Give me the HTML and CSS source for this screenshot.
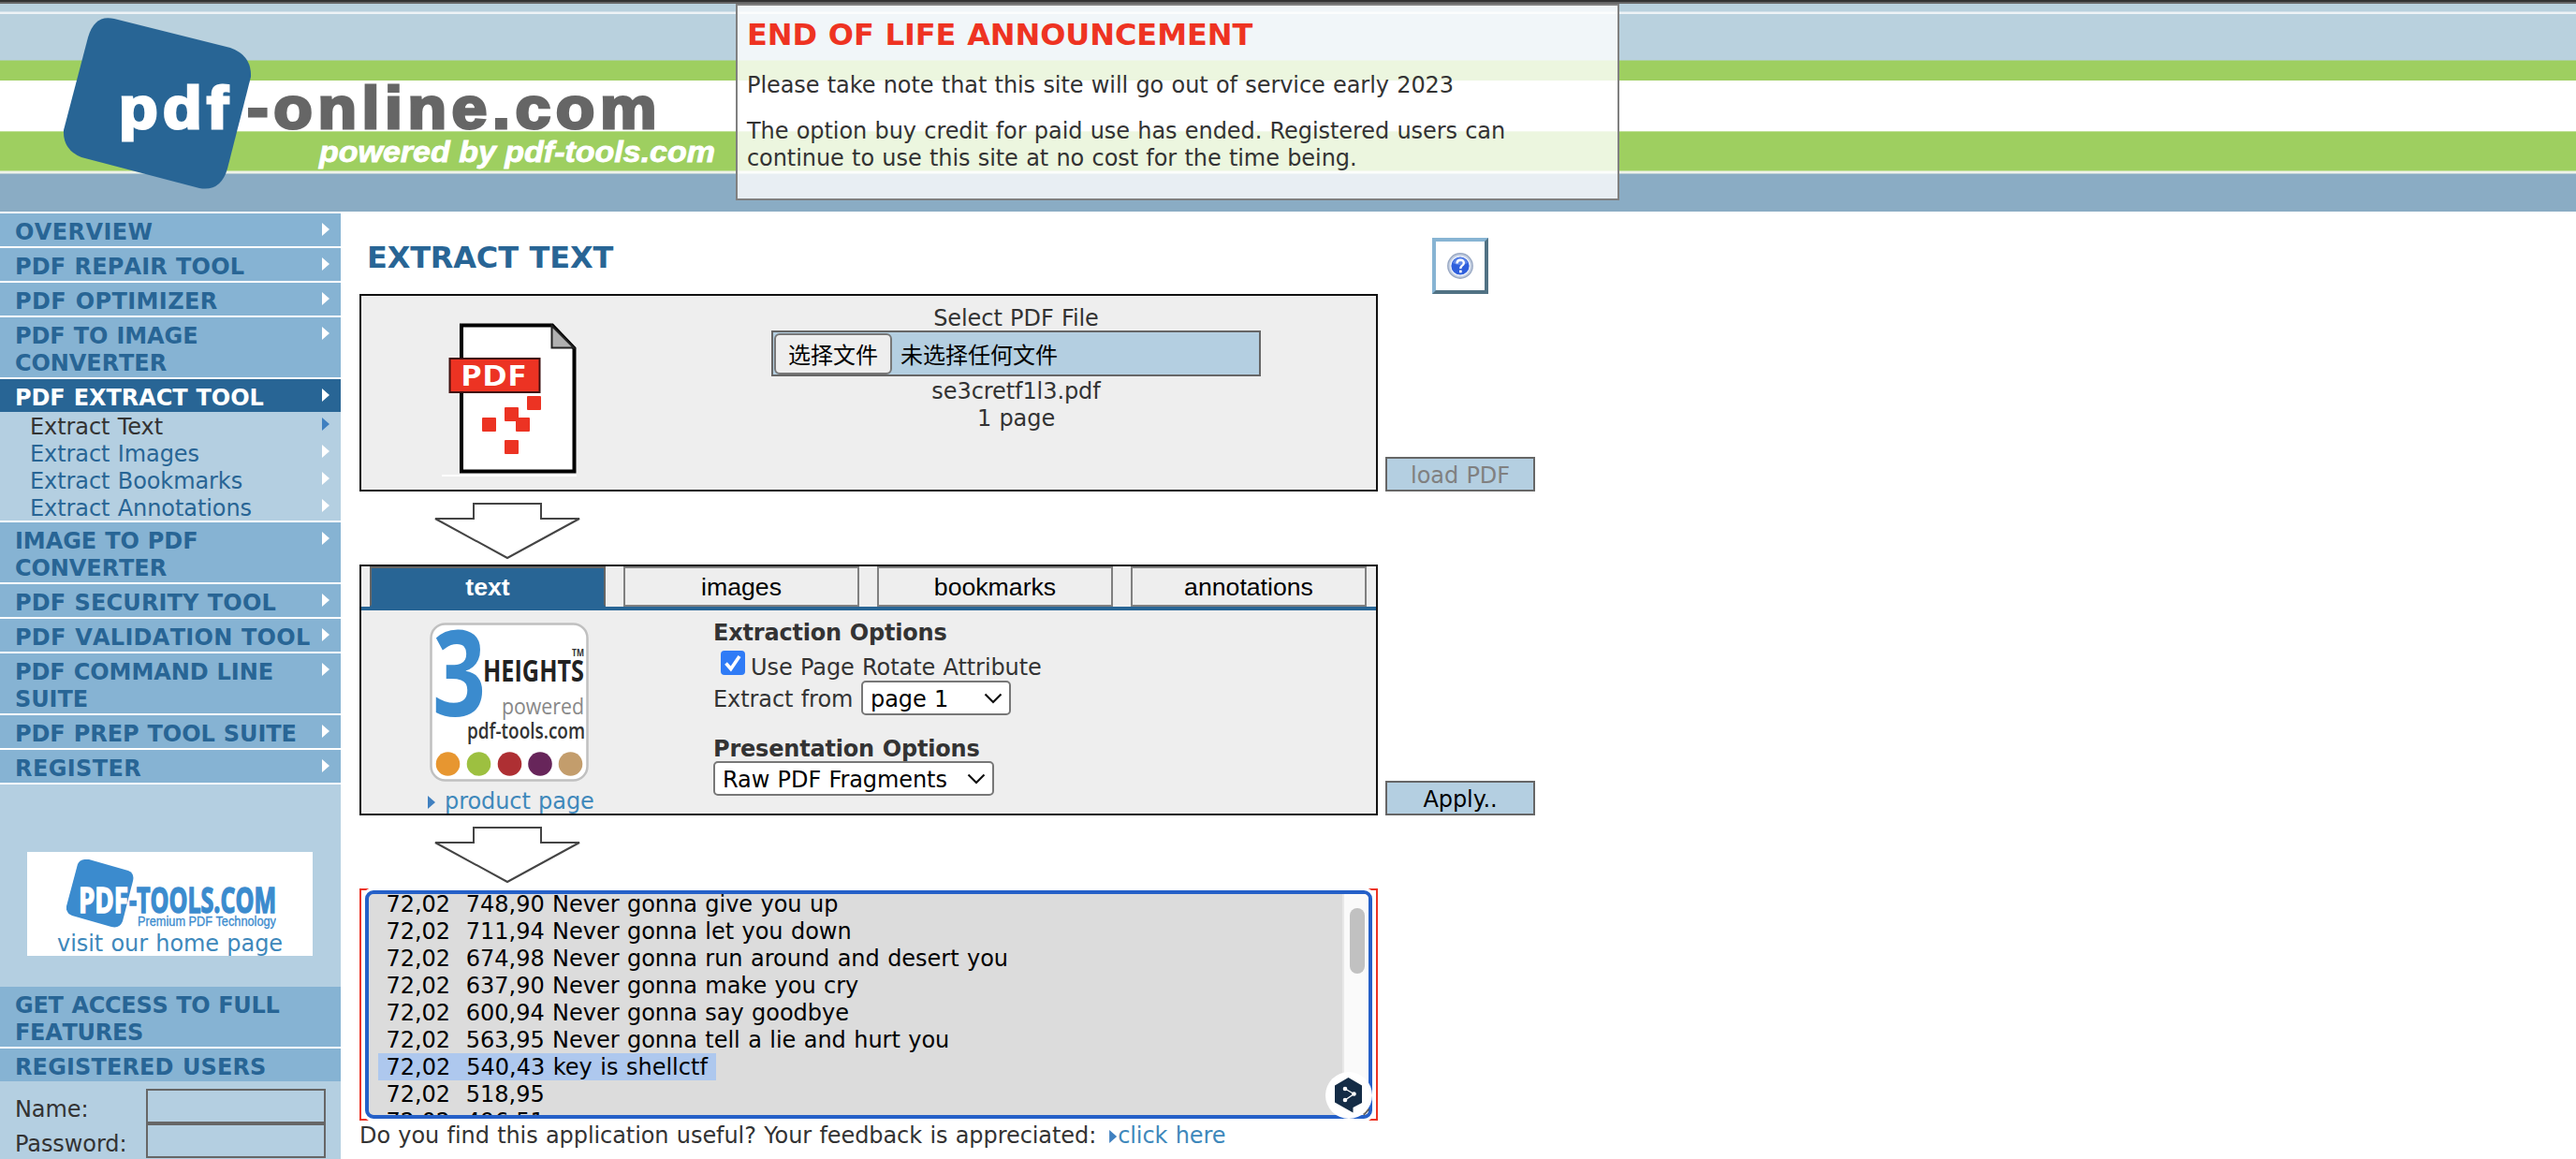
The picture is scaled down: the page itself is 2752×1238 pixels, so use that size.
FILE: index.html
```html
<!DOCTYPE html>
<html lang="en">
<head>
<meta charset="utf-8">
<title>Extract Text</title>
<link rel="stylesheet" href="styles.css">
</head>
<body>
<header class="banner">
  <svg class="logo" viewBox="0 0 780 222" width="780" height="222">
    <path class="logo-tile" d="M122 16L246 47Q269 55 268 78L243 176Q236 201 213 197L87 164Q67 156 68 135L94 36Q101 11 122 16Z"/>
    <g transform="scale(1.08 1)">
      <text class="logo-pdf" x="117.500" y="133" textLength="108" lengthAdjust="spacing">pdf</text>
      <text class="logo-online" x="244.500" y="133" textLength="405" lengthAdjust="spacing">-online.com</text>
    </g>
    <text class="logo-powered" x="341" y="169" textLength="423" lengthAdjust="spacingAndGlyphs">powered by pdf-tools.com</text>
  </svg>
  <div class="notice">
    <h2>END OF LIFE ANNOUNCEMENT</h2>
    <p>Please take note that this site will go out of service early 2023</p>
    <p>The option buy credit for paid use has ended. Registered users can<br>continue to use this site at no cost for the time being.</p>
  </div>
</header>
<div class="page">
  <nav class="sidebar">
    <ul class="menu">
      <li><a class="wide"><span>OVERVIEW</span><i></i></a></li>
      <li><a class="open"><span>PDF REPAIR TOOL</span><i></i></a></li>
      <li><a class="wide"><span>PDF OPTIMIZER</span><i></i></a></li>
      <li><a><span>PDF TO IMAGE<br>CONVERTER</span><i></i></a></li>
      <li><a class="current"><span>PDF EXTRACT TOOL</span><i></i></a>
        <ul class="submenu">
          <li class="here"><span>Extract Text</span><i></i></li>
          <li><span>Extract Images</span><i></i></li>
          <li><span>Extract Bookmarks</span><i></i></li>
          <li><span>Extract Annotations</span><i></i></li>
        </ul>
      </li>
      <li><a><span>IMAGE TO PDF<br>CONVERTER</span><i></i></a></li>
      <li><a class="open"><span>PDF SECURITY TOOL</span><i></i></a></li>
      <li><a class="mid"><span>PDF VALIDATION TOOL</span><i></i></a></li>
      <li><a><span>PDF COMMAND LINE<br>SUITE</span><i></i></a></li>
      <li><a><span>PDF PREP TOOL SUITE</span><i></i></a></li>
      <li><a class="wide"><span>REGISTER</span><i></i></a></li>
    </ul>
    <div class="promo">
      <svg viewBox="0 0 224 75" width="224" height="75">
        <path class="promo-tile" d="M24 0L66 12Q73 15 71 23L60 66Q57 74 48 72L6 60Q-1 57 0 50L12 5Q15 -1 24 0Z"/>
        <text class="promo-pdf" x="13" y="57" textLength="53" lengthAdjust="spacingAndGlyphs">PDF</text>
        <text class="promo-tools" x="67" y="57" textLength="157" lengthAdjust="spacingAndGlyphs">-TOOLS.COM</text>
        <text class="promo-tag" x="76" y="71" textLength="148" lengthAdjust="spacingAndGlyphs">Premium PDF Technology</text>
      </svg>
      <span class="promo-link">visit our home page</span>
    </div>
    <div class="access">
      <h3 class="tight">GET ACCESS TO FULL<br>FEATURES</h3>
      <h3 class="open">REGISTERED USERS</h3>
    </div>
    <form class="login">
      <label><span>Name:</span><input type="text"></label>
      <label><span>Password:</span><input type="password"></label>
    </form>
  </nav>
  <main class="content">
    <div class="title-row">
      <h1>EXTRACT TEXT</h1>
      <button class="help" type="button" aria-label="Help">
        <svg viewBox="0 0 28 28" width="28" height="28">
          <circle cx="14" cy="14" r="13.200" fill="#c4cfe0" stroke="#9aa9c4" stroke-width="1.400"/>
          <circle cx="14" cy="14" r="10.200" fill="#2f5fdc" stroke="#eef3fc" stroke-width="1.200"/>
          <path d="M6 11Q8 5.500 14 5.300Q20 5.500 22 11Q14 15 6 11Z" fill="#7fa2f2" opacity=".6"/>
          <path d="M10.500 11.500Q10.600 7.800 14.200 7.800Q17.900 7.900 17.800 11Q17.700 13 15.700 14Q14.300 15 14.300 17" fill="none" stroke="#fff" stroke-width="2.400"/>
          <rect x="13" y="18.600" width="2.700" height="2.700" fill="#fff"/>
        </svg>
      </button>
    </div>
    <section class="step">
      <div class="panel upload">
        <svg class="pdf-icon" viewBox="0 0 146 166" width="146" height="166">
          <path d="M21 3.500H118L141.500 28V159.500H21Z" fill="#fff" stroke="#000" stroke-width="4"/>
          <path d="M117.500 4V27.500H141Z" fill="#b0b0b0" stroke="#222" stroke-width="2"/>
          <rect x="8.500" y="39" width="96" height="36" fill="#ec3323" stroke="#401010" stroke-width="2"/>
          <text class="pdf-label" x="20" y="67.500" textLength="70" lengthAdjust="spacingAndGlyphs">PDF</text>
          <g fill="#ec3323"><rect x="91" y="79" width="15" height="15" rx="1"/><rect x="67" y="91" width="15" height="15" rx="1"/><rect x="43" y="102" width="15" height="15" rx="1"/><rect x="79" y="102" width="15" height="15" rx="1"/><rect x="67" y="126" width="15" height="15" rx="1"/></g>
          <rect x="0" y="163" width="144" height="2" fill="#fff"/>
        </svg>
        <div class="picker">
          <span>Select PDF File</span>
          <div class="file"><button type="button">选择文件</button><em>未选择任何文件</em></div>
          <span>se3cretf1l3.pdf</span>
          <span>1 page</span>
        </div>
      </div>
      <button class="action" type="button" disabled>load PDF</button>
    </section>
    <div class="flow-arrow">
      <svg viewBox="0 0 158 64" width="158" height="64"><path d="M43 3H115V19H156L79 61L2 19H43Z"/></svg>
    </div>
    <section class="step">
      <div class="panel options">
        <div class="tabs">
          <button class="on" type="button">text</button>
          <button type="button">images</button>
          <button type="button">bookmarks</button>
          <button type="button">annotations</button>
        </div>
        <div class="settings">
          <div class="product">
            <svg viewBox="0 0 170 170" width="170" height="170">
              <rect x="1.500" y="1.500" width="167" height="167" rx="15" fill="#fff" stroke="#c0c0c0" stroke-width="2.500"/>
              <text class="h-three" x="3" y="100" textLength="57" lengthAdjust="spacingAndGlyphs">3</text>
              <text class="h-name" x="57" y="62.500" textLength="108" lengthAdjust="spacingAndGlyphs">HEIGHTS</text>
              <text class="h-tm" x="152" y="36" textLength="13" lengthAdjust="spacingAndGlyphs">TM</text>
              <text class="h-powered" x="77" y="97.500" textLength="88" lengthAdjust="spacingAndGlyphs">powered</text>
              <text class="h-site" x="40" y="123.500" textLength="126" lengthAdjust="spacingAndGlyphs">pdf-tools.com</text>
              <circle cx="19.500" cy="151" r="12.800" fill="#e79630"/><circle cx="52.500" cy="151" r="12.800" fill="#9dc040"/><circle cx="85.500" cy="151" r="12.800" fill="#ae2f33"/><circle cx="118" cy="151" r="12.800" fill="#67255a"/><circle cx="150.500" cy="151" r="12.800" fill="#c39d6c"/>
            </svg>
            <a class="product-link"><i></i><span>product page</span></a>
          </div>
          <div class="fields">
            <h4>Extraction Options</h4>
            <div class="check"><svg viewBox="0 0 26 26" width="26" height="26"><rect width="26" height="26" rx="4" fill="#2f7bf6"/><path d="M5.500 13.500L10.800 19.500L20 6" fill="none" stroke="#fff" stroke-width="3.600"/></svg><span>Use Page Rotate Attribute</span></div>
            <div class="from"><span>Extract from</span>
              <div class="select short"><span>page 1</span><svg viewBox="0 0 20 12" width="20" height="12"><path d="M1.500 1.500L10 10L18.500 1.500"/></svg></div></div>
            <h4 class="second">Presentation Options</h4>
            <div class="select long"><span>Raw PDF Fragments</span><svg viewBox="0 0 20 12" width="20" height="12"><path d="M1.500 1.500L10 10L18.500 1.500"/></svg></div>
          </div>
        </div>
      </div>
      <button class="action" type="button">Apply..</button>
    </section>
    <div class="flow-arrow">
      <svg viewBox="0 0 158 64" width="158" height="64"><path d="M43 3H115V19H156L79 61L2 19H43Z"/></svg>
    </div>
    <div class="result">
      <div class="ring">
        <div class="lines">
          <div> 72,02  748,90 Never gonna give you up</div>
          <div> 72,02  711,94 Never gonna let you down</div>
          <div> 72,02  674,98 Never gonna run around and desert you</div>
          <div> 72,02  637,90 Never gonna make you cry</div>
          <div> 72,02  600,94 Never gonna say goodbye</div>
          <div> 72,02  563,95 Never gonna tell a lie and hurt you</div>
          <div><mark> 72,02  540,43 key is shellctf</mark></div>
          <div> 72,02  518,95</div>
          <div> 72,02  496,51</div>
        </div>
        <div class="track"><div class="thumb"></div></div>
      </div>
      <svg class="translate" viewBox="0 0 50 50" width="50" height="50">
        <path d="M40 45L46 39" stroke="#555" stroke-width="1.500"/>
        <circle cx="25" cy="25" r="25" fill="#fff"/>
        <path d="M24.500 6L39 14.500V33L29.500 38V43.500L10 32.500V14.500Z" fill="#142c46"/>
        <path d="M21 18L30.500 23.500L21 30" fill="none" stroke="#fff" stroke-width="1.300"/>
        <g fill="#fff"><circle cx="21" cy="18" r="2.300"/><circle cx="30.500" cy="23.500" r="2.300"/><circle cx="21" cy="30" r="2.300"/></g>
        <path d="M41 46L46.500 40" stroke="#555" stroke-width="1.300"/>
      </svg>
    </div>
    <p class="feedback"><span>Do you find this application useful? Your feedback is appreciated:</span><a><i></i><span>click here</span></a></p>
  </main>
</div>
</body>
</html>
```
FILE: styles.css
```css
* { box-sizing: border-box; margin: 0; padding: 0; }
body {
  width: 2752px; height: 1238px; overflow: hidden; background: #fff; color: #333;
  font: 24px/29px Verdana, "DejaVu Sans", "Noto Sans CJK SC", sans-serif;
  letter-spacing: -.08px; word-spacing: .8px;
}
ul { list-style: none; }
button, input { font: inherit; color: inherit; letter-spacing: inherit; word-spacing: inherit; }
svg text { letter-spacing: 0; word-spacing: 0; }
i { display: block; width: 8px; height: 14px; background: #fff; clip-path: polygon(0 0, 100% 50%, 0 100%); }

.banner {
  display: flex; height: 226px; border-top: 4px solid #666; position: relative;
  background: linear-gradient(#b9d1de 8px, #edf3f6 9px 10.500px, #b9d1de 11.500px 60px, #9ecf60 61px 81.500px, #fff 82.500px 135.500px, #9ecf60 137px 178px, #eef3e8 179px 181px, #8aacc4 182px);
}
.banner::before { content: ""; position: absolute; left: 0; right: 0; top: -4px; height: 2px; background: #333; }
.logo { margin-right: 6px; flex: none; }
.logo-tile { fill: #286595; }
.logo-pdf, .logo-online { font: bold 63px "Liberation Sans", Arial, sans-serif; fill: #fff; stroke: #fff; stroke-width: 3px; }
.logo-online { fill: #666; stroke: #666; }
.logo-powered { font: italic bold 31px "Liberation Sans", Arial, sans-serif; fill: #fff; stroke: #fff; stroke-width: .8px; }
.notice { width: 944px; height: 210px; border: 2px solid #808080; background: rgba(255, 255, 255, .8); padding: 12px 10px 0; }
.notice h2 { font-size: 32px; line-height: 39px; color: #ee3322; margin-bottom: 20px; }
.notice p { margin-bottom: 20px; white-space: nowrap; }

.page { display: flex; height: 1012px; }
.sidebar { width: 364px; flex: none; background: #b4cfe1; }
.menu { border-top: 2px solid #fff; }
.menu > li { border-bottom: 2px solid #fff; }
.menu a { display: flex; justify-content: space-between; background: #86b3d3; color: #286595; font-weight: bold; padding: 6px 12px 0 16px; white-space: nowrap; font-kerning: none; }
.menu a i { margin-top: 4px; flex: none; }
.menu a.current { background: #286595; color: #fff; }
.sidebar .tight { letter-spacing: -.300px; }
.sidebar .open { letter-spacing: .130px; }
.sidebar .mid { letter-spacing: .270px; }
.sidebar .wide { letter-spacing: .400px; }
.submenu li { display: flex; justify-content: space-between; height: 29px; padding: 2px 12px 0 32px; color: #286595; }
.submenu i { margin-top: 4px; }
.submenu .here { color: #333; }
.submenu .here i { background: #4080c0; }
.promo { width: 305px; height: 111px; margin: 72px 0 33px 29px; padding-top: 8px; background: #fff; display: flex; flex-direction: column; align-items: center; }
.promo svg { flex: none; margin-left: 2px; }
.promo-tile { fill: #3b8bce; }
.promo-pdf, .promo-tools { font: bold 37px "Open Sans", sans-serif; fill: #fff; stroke: #fff; stroke-width: 1.500px; }
.promo-tools { fill: #3b8bce; stroke: #3b8bce; }
.promo-tag { font: 14px "Liberation Sans", sans-serif; fill: #3b8bce; stroke: #3b8bce; stroke-width: .3px; }
.promo-link { color: #3e88bb; white-space: nowrap; padding-top: 1px; }
.access h3 { font-size: 24px; color: #286595; background: #86b3d3; padding: 6px 0 0 16px; white-space: nowrap; font-kerning: none; }
.access h3 + h3 { border-top: 2px solid #fff; }
.login { padding: 8px 0 0 16px; }
.login label { display: flex; height: 37px; align-items: center; }
.login label span { width: 140px; padding-top: 7px; }
.login input { width: 192px; height: 37px; border: 2px solid #666; background: #b4cfe1; }

.content { padding-left: 20px; }
.title-row { display: flex; height: 88px; padding: 28px 0 0 8px; justify-content: space-between; width: 1206px; }
.title-row h1 { font-size: 32px; line-height: 39px; color: #286595; padding-top: 2px; letter-spacing: -.180px; }
.help { width: 60px; height: 60px; background: #fff; border: 4px solid; border-color: #87b4d3 #517284 #517284 #87b4d3; display: grid; place-items: center; }
.step { display: flex; align-items: flex-end; gap: 8px; }
.panel { width: 1088px; border: 2px solid #111; background: #eee; }
.action { width: 160px; height: 37px; border: 2px solid #666; background: #b4cfe1; color: #000; padding-top: 4px; }
.action:disabled { color: #808080; }
.upload { height: 211px; display: flex; }
.pdf-icon { margin: 28px 0 0 86px; flex: none; }
.picker { margin-left: 206px; width: 523px; padding-top: 10px; display: flex; flex-direction: column; align-items: center; }
.file { width: 523px; height: 49px; margin: -2px 0 2px; border: 2px solid #666; background: #b4cfe1; display: flex; align-items: center; color: #000; padding-left: 1px; gap: 9px; letter-spacing: 0; }
.file button { width: 126px; height: 44px; border: 2px solid #777; border-radius: 6px; background: #eee; }
.file button, .file em { font: normal 24px/29px "Noto Sans CJK SC", sans-serif; white-space: nowrap; }
.flow-arrow { height: 78px; padding: 10px 0 0 79px; }
.flow-arrow path { fill: #fff; stroke: #444; stroke-width: 2px; }
.options { height: 268px; }
.tabs { display: flex; gap: 19px; height: 47px; padding-left: 9px; border-bottom: 4px solid #286595; }
.tabs button { width: 252px; height: 43px; border: 2px solid #808080; background: #eee; color: #000; font: 26.670px/36px "Liberation Sans", Arial, sans-serif; letter-spacing: 0; }
.tabs .on { background: #286595; border-color: #666 #666 #286595; color: #fff; font-weight: bold; }
.settings { display: flex; }
.product { width: 376px; padding: 13px 0 0 71px; }
.product svg { display: block; margin-left: 2px; }
.h-three { font: bold 127px "Open Sans", sans-serif; fill: #3b8bce; }
.h-name { font: bold 33px "Open Sans", sans-serif; fill: #222; }
.h-tm { font: bold 11px "Open Sans", sans-serif; fill: #333; }
.h-powered { font: 24px "Open Sans", sans-serif; fill: #888; }
.h-site { font: 600 23px "Open Sans", sans-serif; fill: #333; }
.pdf-label { font: bold 31px "Open Sans", sans-serif; fill: #fff; }
.product-link { display: flex; color: #3e88bb; white-space: nowrap; gap: 10px; padding-top: 7px; height: 35px; }
.product-link i { background: #4080c0; margin-top: 8px; }
.fields { padding-top: 10px; white-space: nowrap; }
.fields h4 { font-size: 24px; letter-spacing: -.200px; }
.check { display: flex; height: 36px; padding-left: 8px; gap: 6px; }
.check svg { margin-top: 4px; }
.check span { padding-top: 8px; }
.from { display: flex; height: 38px; align-items: flex-start; }
.from > span { width: 158px; padding-top: 6px; }
.select { display: flex; align-items: center; justify-content: space-between; height: 37px; padding: 0 7px 0 8px; border: 2px solid #777; border-radius: 5px; background: #fff; color: #000; }
.select span { padding-top: 4px; }
.select path { fill: none; stroke: #111; stroke-width: 2.200px; }
.short { width: 160px; }
.long { width: 300px; margin-top: -2px; }
.second { margin-top: 21px; }
.result { position: relative; width: 1088px; height: 248px; border: 2px solid #ec3323; display: flex; padding: 0 4px; }
.ring { flex: 1; display: flex; border: 4px solid #2560c8; border-radius: 9px; box-shadow: 0 0 0 3px #fff; overflow: hidden; background: #dcdcdc; }
.lines { flex: 1; height: 236px; overflow: hidden; padding-left: 10px; color: #000; white-space: pre; display: flex; flex-direction: column; letter-spacing: -.02px; }
.lines div { flex: none; height: 29px; line-height: 31px; }
.lines div:first-child { margin-top: -4px; }
.lines mark { background: #aec8ee; color: #000; display: inline-block; height: 29px; padding-right: 9px; letter-spacing: .02px; }
.track { width: 28px; background: #fafafa; border-left: 2px solid #e8e8e8; padding: 15px 0 0 6px; }
.thumb { width: 16px; height: 70px; border-radius: 8px; background: #c1c1c1; }
.translate { position: absolute; left: 1030px; top: 194px; }
.feedback { display: flex; padding-top: 2px; white-space: nowrap; gap: 14px; }
.feedback a { display: flex; color: #3e88bb; gap: 1px; }
.feedback i { background: #4080c0; margin-top: 8px; }
```
